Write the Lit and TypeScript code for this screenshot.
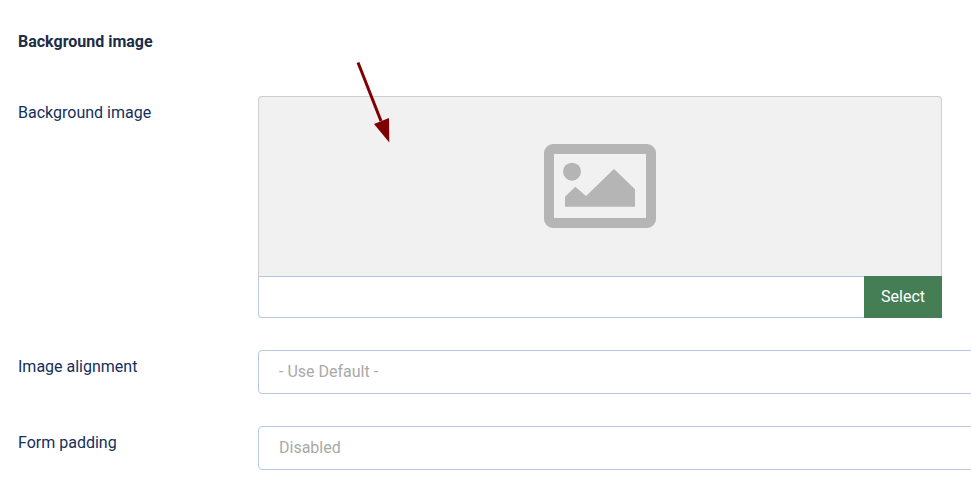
import { LitElement, html, css } from "lit";
import { customElement } from "lit/decorators.js";

@customElement("app-root")
export class AppRoot extends LitElement {
  static styles = css`
    :host {
      display: block;
      position: relative;
      width: 971px;
      height: 488px;
      overflow: hidden;
      background: #fff;
      font-family: Roboto, "Liberation Sans", sans-serif;
      font-size: 16px;
    }
    .page {
      display: flex;
      flex-direction: column;
      padding: 32px 0 0 18px;
    }
    .heading {
      margin: 0 0 44px;
      font-size: 16px;
      line-height: 20px;
      font-weight: 700;
      color: #1c2d46;
    }
    .row {
      display: grid;
      grid-template-columns: 240px 800px;
      margin-bottom: 32px;
    }
    .label {
      font-size: 16px;
      line-height: 24px;
      color: #132f5c;
      padding-top: 5px;
    }
    .media {
      width: 684px;
      height: 222px;
      box-sizing: border-box;
      display: flex;
      flex-direction: column;
    }
    .preview {
      height: 180px;
      box-sizing: border-box;
      flex: none;
      display: flex;
      align-items: center;
      justify-content: center;
      padding-bottom: 1px;
      background: #f1f1f1;
      border: 1px solid #cfcfcf;
      border-bottom: none;
      border-radius: 4px 4px 0 0;
    }
    .picker {
      display: flex;
      height: 42px;
      flex: none;
    }
    .path {
      flex: 1;
      box-sizing: border-box;
      border: 1px solid #b7c7e2;
      border-right: none;
      border-radius: 0 0 0 4px;
      background: #fff;
    }
    .select {
      width: 78px;
      box-sizing: border-box;
      padding-bottom: 2px;
      display: flex;
      align-items: center;
      justify-content: center;
      background: #457d54;
      color: #fff;
      font-size: 16px;
    }
    .control {
      height: 44px;
      box-sizing: border-box;
      border: 1px solid #b7c7e2;
      border-radius: 4px;
      padding: 0 20px 2px;
      display: flex;
      align-items: center;
      font-size: 16px;
      color: #a9a9a9;
      background: #fff;
    }
    .arrow {
      position: absolute;
      left: 0;
      top: 0;
      pointer-events: none;
    }
    svg {
      display: block;
    }
  `;

  render() {
    return html`
      <div class="page">
        <h3 class="heading">Background image</h3>
        <div class="row">
          <div class="label">Background image</div>
          <div class="media">
            <div class="preview">
              <svg width="112" height="84" viewBox="0 0 112 84">
                <path
                  fill="#b5b5b5"
                  fill-rule="evenodd"
                  d="M9 0H103A9 9 0 0 1 112 9V75A9 9 0 0 1 103 84H9A9 9 0 0 1 0 75V9A9 9 0 0 1 9 0ZM10 10V74H102V10Z"
                />
                <circle cx="28" cy="27.7" r="9" fill="#b5b5b5" />
                <path
                  fill="#b5b5b5"
                  d="M21 62.7V52.7L31.3 42.7L42 52L70 25L91 45.3V62.7Z"
                />
              </svg>
            </div>
            <div class="picker">
              <div class="path"></div>
              <div class="select">Select</div>
            </div>
          </div>
        </div>
        <div class="row">
          <div class="label">Image alignment</div>
          <div class="control">- Use Default -</div>
        </div>
        <div class="row">
          <div class="label">Form padding</div>
          <div class="control">Disabled</div>
        </div>
      </div>
      <svg class="arrow" width="971" height="488" viewBox="0 0 971 488">
        <line x1="358" y1="62.5" x2="381" y2="121" stroke="#800000" stroke-width="3" />
        <polygon points="389.3,142.5 374,124 389,118" fill="#800000" />
      </svg>
    `;
  }
}
